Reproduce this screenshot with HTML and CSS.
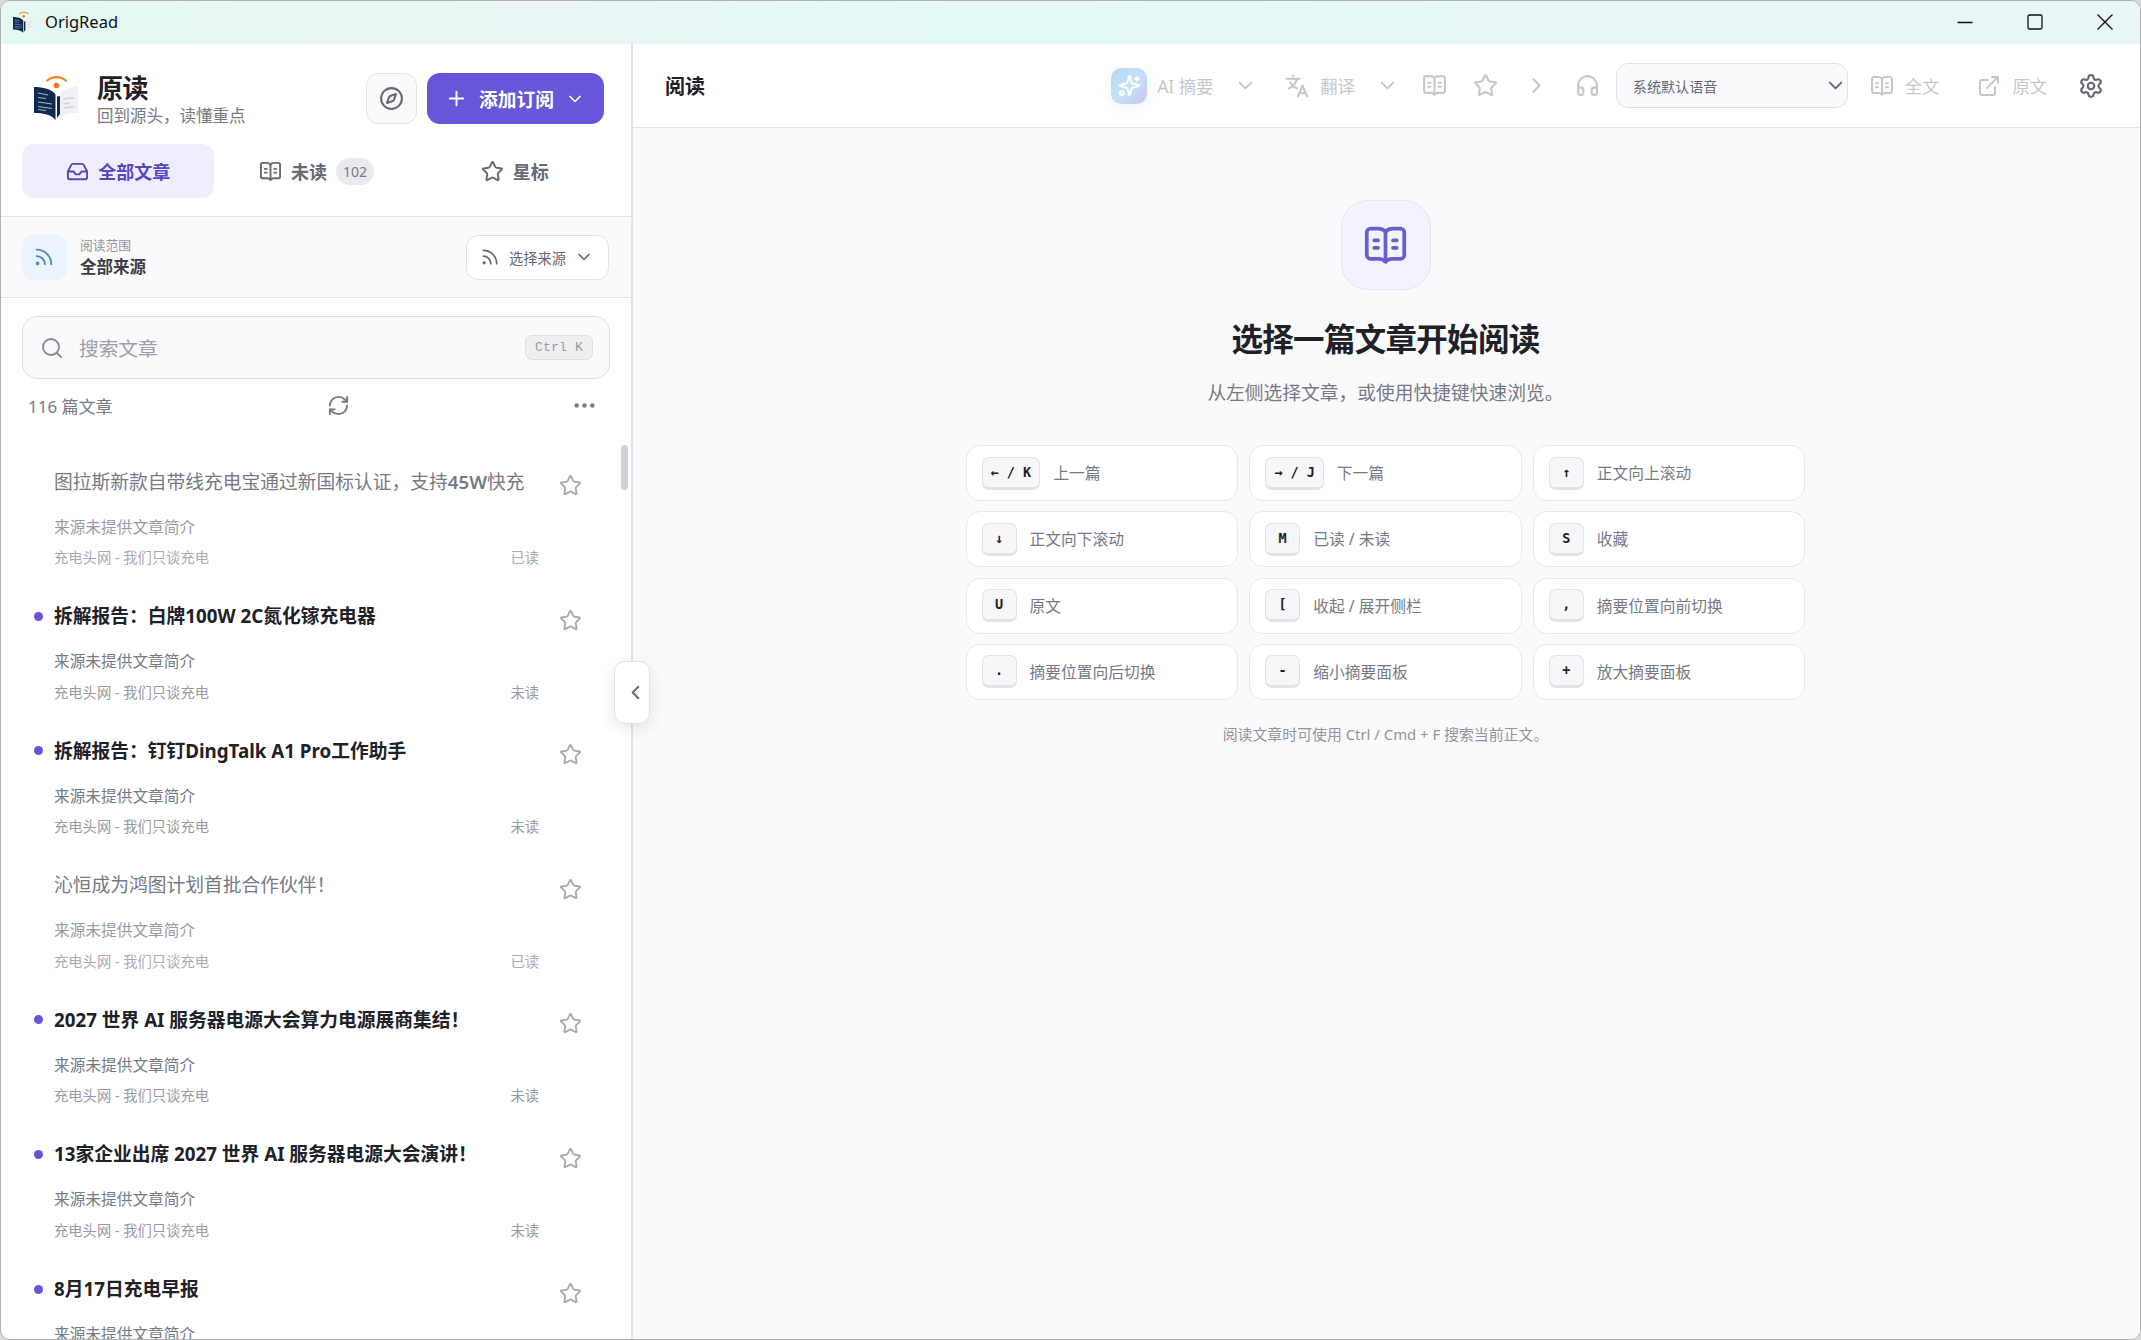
FILE: index.html
```html
<!doctype html>
<html lang="zh-CN">
	<head>
		<meta charset="UTF-8" />
		<meta name="viewport" content="width=device-width, initial-scale=1.0" />
		<title>OrigRead</title>
		<link rel="stylesheet" href="styles.css">
	</head>
	<body>
		<svg class="sprite" aria-hidden="true">
			<symbol id="logo" viewBox="0 0 44 45">
				<path d="M12.500 6.200a14.500 14.500 0 0 1 20 0" fill="none" stroke="#fb861c" stroke-width="2.200" />
				<circle cx="22.500" cy="10.500" r="2.800" fill="#f5741a" />
				<path d="M44 11v27c-8 0-15 1-19 6.500V21c3-6 10-9.500 19-10z" fill="#f0f1f5" />
				<path d="M29.500 24l11-1.500M29.500 28.500h6M29.500 33l11-1.500" stroke="#cfd2de" stroke-width="1.300" />
				<path d="M0 12c9 0 18 2 21.500 7.500V45C17 39.500 9 38 0 38zM23 22c1-1.500 3-1.500 3 0v17l-3 4z" fill="#10294f" />
				<path d="M4 18l10 2M4 22.500l8 1M4 27l14 2M4 31.500l14 2M4 34.500l8 1" stroke="#a9b4ca" stroke-width="1.100" />
			</symbol>
			<symbol id="compass" viewBox="0 0 24 24"><circle cx="12" cy="12" r="10" /><path d="m16.240 7.760-1.804 5.411a2 2 0 0 1-1.265 1.265L7.760 16.240l1.804-5.411a2 2 0 0 1 1.265-1.265z" /></symbol>
			<symbol id="plus" viewBox="0 0 24 24"><path d="M5 12h14M12 5v14" /></symbol>
			<symbol id="down" viewBox="0 0 24 24"><path d="m6 9 6 6 6-6" /></symbol>
			<symbol id="right" viewBox="0 0 24 24"><path d="m9 18 6-6-6-6" /></symbol>
			<symbol id="left" viewBox="0 0 24 24"><path d="m15 18-6-6 6-6" /></symbol>
			<symbol id="inbox" viewBox="0 0 24 24"><path d="M22 12h-6l-2 3h-4l-2-3H2" /><path d="M5.450 5.110 2 12v6a2 2 0 0 0 2 2h16a2 2 0 0 0 2-2v-6l-3.450-6.890A2 2 0 0 0 16.760 4H7.240a2 2 0 0 0-1.790 1.110z" /></symbol>
			<symbol id="book" viewBox="0 0 24 24"><path d="M12 5v15.500M6 9.300h2M6 13.200h2M16 9.300h2M16 13.200h2" /><path d="M12 20.700c-.7-1-2-1.600-3.500-1.600H4a2 2 0 0 1-2-2V5a2 2 0 0 1 2-2h4c1.700 0 3.200.6 4 1.800.8-1.200 2.300-1.800 4-1.800h4a2 2 0 0 1 2 2v12.100a2 2 0 0 1-2 2h-4.500c-1.500 0-2.800.6-3.500 1.600z" /></symbol>
			<symbol id="star" viewBox="0 0 24 24"><path d="M11.525 2.295a.53.53 0 0 1 .95 0l2.310 4.679a2.123 2.123 0 0 0 1.595 1.160l5.166.756a.53.53 0 0 1 .294.904l-3.736 3.638a2.123 2.123 0 0 0-.611 1.878l.882 5.140a.53.53 0 0 1-.771.560l-4.618-2.428a2.122 2.122 0 0 0-1.973 0L6.396 21.010a.53.53 0 0 1-.77-.560l.881-5.139a2.122 2.122 0 0 0-.611-1.879L2.160 9.795a.53.53 0 0 1 .294-.906l5.165-.755a2.122 2.122 0 0 0 1.597-1.160z" /></symbol>
			<symbol id="rss" viewBox="0 0 24 24"><path d="M4 11a9 9 0 0 1 9 9M4 4a16 16 0 0 1 16 16" /><circle cx="5" cy="19" r="1" /></symbol>
			<symbol id="search" viewBox="0 0 24 24"><circle cx="11" cy="11" r="8" /><path d="m21 21-4.300-4.300" /></symbol>
			<symbol id="refresh" viewBox="0 0 24 24"><path d="M3 12a9 9 0 0 1 9-9 9.750 9.750 0 0 1 6.740 2.740L21 8" /><path d="M21 3v5h-5M21 12a9 9 0 0 1-9 9 9.750 9.750 0 0 1-6.740-2.740L3 16" /><path d="M8 16H3v5" /></symbol>
			<symbol id="more" viewBox="0 0 24 24"><circle cx="12" cy="12" r="1" /><circle cx="19" cy="12" r="1" /><circle cx="5" cy="12" r="1" /></symbol>
			<symbol id="sparkles" viewBox="0 0 24 24"><path d="M9.937 15.500A2 2 0 0 0 8.500 14.063l-6.135-1.582a.5.5 0 0 1 0-.962L8.500 9.936A2 2 0 0 0 9.937 8.500l1.582-6.135a.5.5 0 0 1 .963 0L14.063 8.500A2 2 0 0 0 15.500 9.937l6.135 1.581a.5.5 0 0 1 0 .964L15.500 14.063a2 2 0 0 0-1.437 1.437l-1.582 6.135a.5.5 0 0 1-.963 0z" /><path d="M20 3v4M22 5h-4" /><circle cx="4" cy="20" r="2" /></symbol>
			<symbol id="translate" viewBox="0 0 24 24"><path d="M1.500 4.800h13M7.800 1.800h.6M12 5c-1 4-4 7.500-8 9.500M5 8.500c2 3 4 4.800 7 6" /><path d="m12.800 22.500 4.700-11 4.700 11M14.500 19.300h6" /></symbol>
			<symbol id="headphones" viewBox="0 0 24 24"><path d="M3 14h3a2 2 0 0 1 2 2v3a2 2 0 0 1-2 2H5a2 2 0 0 1-2-2v-7a9 9 0 0 1 18 0v7a2 2 0 0 1-2 2h-1a2 2 0 0 1-2-2v-3a2 2 0 0 1 2-2h3" /></symbol>
			<symbol id="external" viewBox="0 0 24 24"><path d="M15 3h6v6M10 14 21 3M18 13v6a2 2 0 0 1-2 2H5a2 2 0 0 1-2-2V8a2 2 0 0 1 2-2h6" /></symbol>
			<symbol id="gear" viewBox="0 0 24 24"><path d="M9.671 4.136a2.340 2.340 0 0 1 4.659 0 2.340 2.340 0 0 0 3.319 1.915 2.340 2.340 0 0 1 2.330 4.033 2.340 2.340 0 0 0 0 3.831 2.340 2.340 0 0 1-2.330 4.033 2.340 2.340 0 0 0-3.319 1.915 2.340 2.340 0 0 1-4.659 0 2.340 2.340 0 0 0-3.320-1.915 2.340 2.340 0 0 1-2.330-4.033 2.340 2.340 0 0 0 0-3.831A2.340 2.340 0 0 1 6.350 6.051a2.340 2.340 0 0 0 3.319-1.915" /><circle cx="12" cy="12" r="3" /></symbol>
		</svg>

		<div class="window">
			<header class="titlebar">
				<svg class="app-icon"><use href="#logo" /></svg>
				<span>OrigRead</span>
				<div class="controls">
					<svg viewBox="0 0 16 16"><path d="M.5 8.500h15" /></svg>
					<svg viewBox="0 0 16 16"><rect x="1" y="1" width="14" height="14" rx="1.500" /></svg>
					<svg viewBox="0 0 16 16"><path d="m.5.5 15 15m0-15-15 15" /></svg>
				</div>
			</header>

			<div class="app">
				<aside class="sidebar">
					<div class="brand">
						<svg class="logo"><use href="#logo" /></svg>
						<div class="brand-text">
							<h1>原读</h1>
							<p>回到源头，读懂重点</p>
						</div>
						<button class="discover"><svg class="icon"><use href="#compass" /></svg></button>
						<button class="add">
							<svg class="icon"><use href="#plus" /></svg>
							<span>添加订阅</span>
							<svg class="icon small"><use href="#down" /></svg>
						</button>
					</div>
					<nav class="tabs">
						<button class="tab active"><svg class="icon"><use href="#inbox" /></svg>全部文章</button>
						<button class="tab"><svg class="icon"><use href="#book" /></svg>未读<span class="badge">102</span></button>
						<button class="tab"><svg class="icon"><use href="#star" /></svg>星标</button>
					</nav>

					<div class="scope">
						<div class="scope-icon"><svg class="icon"><use href="#rss" /></svg></div>
						<div class="scope-text">
							<span>阅读范围</span>
							<strong>全部来源</strong>
						</div>
						<button class="source">
							<svg class="icon"><use href="#rss" /></svg>
							<span>选择来源</span>
							<svg class="icon small"><use href="#down" /></svg>
						</button>
					</div>

					<div class="search">
						<svg class="icon"><use href="#search" /></svg>
						<span>搜索文章</span>
						<kbd>Ctrl K</kbd>
					</div>
					<div class="list-head">
						<span>116 篇文章</span>
						<svg class="icon"><use href="#refresh" /></svg>
						<svg class="icon more"><use href="#more" /></svg>
					</div>

					<div class="list">
						<article class="item read">
							<h2>图拉斯新款自带线充电宝通过新国标认证，支持<b>45W</b>快充</h2>
							<svg class="icon"><use href="#star" /></svg>
							<p>来源未提供文章简介</p>
							<footer><span>充电头网 - 我们只谈充电</span><span>已读</span></footer>
						</article>
						<article class="item">
							<h2>拆解报告：白牌100W 2C氮化镓充电器</h2>
							<svg class="icon"><use href="#star" /></svg>
							<p>来源未提供文章简介</p>
							<footer><span>充电头网 - 我们只谈充电</span><span>未读</span></footer>
						</article>
						<article class="item">
							<h2>拆解报告：钉钉DingTalk A1 Pro工作助手</h2>
							<svg class="icon"><use href="#star" /></svg>
							<p>来源未提供文章简介</p>
							<footer><span>充电头网 - 我们只谈充电</span><span>未读</span></footer>
						</article>
						<article class="item read">
							<h2>沁恒成为鸿图计划首批合作伙伴！</h2>
							<svg class="icon"><use href="#star" /></svg>
							<p>来源未提供文章简介</p>
							<footer><span>充电头网 - 我们只谈充电</span><span>已读</span></footer>
						</article>
						<article class="item">
							<h2>2027 世界 AI 服务器电源大会算力电源展商集结！</h2>
							<svg class="icon"><use href="#star" /></svg>
							<p>来源未提供文章简介</p>
							<footer><span>充电头网 - 我们只谈充电</span><span>未读</span></footer>
						</article>
						<article class="item">
							<h2>13家企业出席 2027 世界 AI 服务器电源大会演讲！</h2>
							<svg class="icon"><use href="#star" /></svg>
							<p>来源未提供文章简介</p>
							<footer><span>充电头网 - 我们只谈充电</span><span>未读</span></footer>
						</article>
						<article class="item">
							<h2>8月17日充电早报</h2>
							<svg class="icon"><use href="#star" /></svg>
							<p>来源未提供文章简介</p>
						</article>
						<div class="scrollbar"></div>
					</div>
					<button class="collapse"><svg class="icon"><use href="#left" /></svg></button>
				</aside>

				<main class="reader">
					<div class="toolbar">
						<h2>阅读</h2>
						<div class="tool ai"><i><svg class="icon"><use href="#sparkles" /></svg></i>AI 摘要</div>
						<svg class="icon chevron"><use href="#down" /></svg>
						<div class="tool translate"><svg class="icon"><use href="#translate" /></svg>翻译</div>
						<svg class="icon chevron"><use href="#down" /></svg>
						<svg class="icon single"><use href="#book" /></svg>
						<svg class="icon single"><use href="#star" /></svg>
						<svg class="icon single"><use href="#right" /></svg>
						<svg class="icon single"><use href="#headphones" /></svg>
						<div class="voice">系统默认语音<svg class="icon"><use href="#down" /></svg></div>
						<div class="tool full"><svg class="icon"><use href="#book" /></svg>全文</div>
						<div class="tool origin"><svg class="icon"><use href="#external" /></svg>原文</div>
						<svg class="icon settings"><use href="#gear" /></svg>
					</div>

					<section class="empty">
						<div class="empty-icon"><svg class="icon"><use href="#book" /></svg></div>
						<h2>选择一篇文章开始阅读</h2>
						<p>从左侧选择文章，或使用快捷键快速浏览。</p>
						<div class="keys">
							<div class="key"><kbd>← / K</kbd><span>上一篇</span></div>
							<div class="key"><kbd>→ / J</kbd><span>下一篇</span></div>
							<div class="key"><kbd>↑</kbd><span>正文向上滚动</span></div>
							<div class="key"><kbd>↓</kbd><span>正文向下滚动</span></div>
							<div class="key"><kbd>M</kbd><span>已读 / 未读</span></div>
							<div class="key"><kbd>S</kbd><span>收藏</span></div>
							<div class="key"><kbd>U</kbd><span>原文</span></div>
							<div class="key"><kbd>[</kbd><span>收起 / 展开侧栏</span></div>
							<div class="key"><kbd>,</kbd><span>摘要位置向前切换</span></div>
							<div class="key"><kbd>.</kbd><span>摘要位置向后切换</span></div>
							<div class="key"><kbd>-</kbd><span>缩小摘要面板</span></div>
							<div class="key"><kbd>+</kbd><span>放大摘要面板</span></div>
						</div>
						<small>阅读文章时可使用 Ctrl / Cmd + F 搜索当前正文。</small>
					</section>
				</main>
			</div>
		</div>
	</body>
</html>
```

FILE: styles.css
```css
* {
	box-sizing: border-box;
	margin: 0;
	padding: 0;
}
body {
	width: 100vw;
	height: 100vh;
	overflow: hidden;
	background-color: #d9d9dc;
	color: #202127;
	font-family: "Noto Sans", "Noto Sans CJK SC", sans-serif;
}
button {
	border: 0;
	background: none;
	font: inherit;
	color: inherit;
}
.sprite {
	position: absolute;
	width: 0;
	height: 0;
}
.icon {
	flex: none;
	width: 23px;
	height: 23px;
	fill: none;
	stroke: currentColor;
	stroke-width: 2;
	stroke-linecap: round;
	stroke-linejoin: round;
}
.window {
	display: flex;
	flex-direction: column;
	height: 1340px;
	border: 1px solid #aeb0b2;
	border-radius: 10px;
	overflow: hidden;
	background-color: #fff;
}

/* title bar */
.titlebar {
	display: flex;
	align-items: center;
	height: 43px;
	padding: 0 27px 2px 12px;
	background: linear-gradient(90deg, #e3f9f4 0, #e9f7f2 250px, #e9f6f6 640px, #e2f9f8 1000px, #e8f6f7 1500px);
	color: #111;
	font-size: 16.500px;
}
.app-icon {
	width: 21px;
	height: 22px;
	margin-right: 11px;
}
.controls {
	display: flex;
	gap: 54px;
	margin-left: auto;
}
.controls svg {
	width: 16px;
	height: 16px;
	fill: none;
	stroke: #111;
	stroke-width: 1.300;
}
.app {
	display: flex;
	flex: 1;
	min-height: 0;
}

/* sidebar */
.sidebar {
	position: relative;
	display: flex;
	flex-direction: column;
	flex: none;
	width: 632px;
	border-right: 2px solid #e2e2e9;
}
.brand {
	display: flex;
	align-items: center;
	height: 81px;
	margin-top: 14px;
	padding: 0 27px 0 33px;
}
.logo {
	width: 44px;
	height: 45px;
	margin: 0 19px 3px 0;
}
.brand-text {
	margin: 2px auto 0 0;
}
.brand h1 {
	font-size: 26px;
	line-height: 32px;
	letter-spacing: -0.600px;
}
.brand p {
	color: #777985;
	font-size: 16.500px;
	line-height: 24px;
}
.discover {
	display: flex;
	align-items: center;
	justify-content: center;
	width: 51px;
	height: 51px;
	border: 1px solid #e2e2e8;
	border-radius: 12px;
	background-color: #fafafc;
	color: #666874;
}
.discover .icon {
	width: 25px;
	height: 25px;
}
.add {
	display: flex;
	align-items: center;
	width: 177px;
	height: 51px;
	margin-left: 10px;
	padding-left: 18px;
	border-radius: 13px;
	background-color: #6656d9;
	color: #fff;
	font-size: 18.750px;
	font-weight: 700;
}
.add span {
	margin: 0 11px;
}
.add .small {
	width: 20px;
	height: 20px;
}
.tabs {
	display: grid;
	grid-template-columns: repeat(3, 1fr);
	gap: 6px;
	height: 78px;
	padding: 5px 20px 18px 21px;
	border-bottom: 1px solid #e2e2e8;
}
.tab {
	display: flex;
	align-items: center;
	justify-content: center;
	gap: 9px;
	border-radius: 12px;
	color: #666874;
	font-size: 18px;
	font-weight: 600;
}
.active {
	background-color: #f0edff;
	color: #5747c4;
}
.badge {
	height: 27px;
	margin-top: 1px;
	padding: 0 7px;
	border-radius: 14px;
	background-color: #e9e9ef;
	color: #777985;
	font-size: 14px;
	font-weight: 400;
	line-height: 27px;
}
.scope {
	display: flex;
	align-items: center;
	height: 81px;
	padding: 0 22px 0 21px;
	border-bottom: 1px solid #e2e2e8;
	background-color: #fafafb;
}
.scope-icon {
	display: flex;
	align-items: center;
	justify-content: center;
	width: 45px;
	height: 45px;
	margin-right: 13px;
	border-radius: 11px;
	background-color: #ebf3fd;
	color: #5089c4;
}
.scope-icon .icon {
	width: 22px;
	height: 22px;
	margin-right: 1px;
}
.scope-text {
	display: flex;
	flex-direction: column;
	margin-right: auto;
}
.scope-text span {
	color: #92949e;
	font-size: 12.750px;
	line-height: 19px;
}
.scope-text strong {
	color: #3c3d46;
	font-size: 16.500px;
	line-height: 23px;
}
.source {
	display: flex;
	align-items: center;
	width: 143px;
	height: 45px;
	padding-left: 13px;
	border: 1px solid #e0e0e7;
	border-radius: 12px;
	background-color: #fff;
	color: #666874;
	font-size: 14.250px;
}
.source .icon {
	width: 20px;
	height: 20px;
}
.source span {
	margin: 0 8px 0 9px;
}
.search {
	display: flex;
	align-items: center;
	height: 63px;
	margin: 18px 21px 0 21px;
	padding: 0 16px 0 17px;
	border: 1px solid #dfdfe7;
	border-radius: 15px;
	background-color: #fafafc;
	color: #858792;
}
.search .icon {
	width: 24px;
	height: 24px;
	stroke-width: 1.800;
}
.search span {
	flex: 1;
	margin-left: 15px;
	color: #9c9ea8;
	font-size: 19.700px;
}
.search kbd {
	width: 68px;
	height: 25px;
	border: 1px solid #dedee3;
	border-radius: 7px;
	background-color: #efeff2;
	color: #9a9ca5;
	font-family: "Liberation Mono", monospace;
	font-size: 13.300px;
	line-height: 23px;
	text-align: center;
}
.list-head {
	display: flex;
	align-items: center;
	justify-content: space-between;
	height: 53px;
	padding: 0 26px 0 27px;
	color: #777985;
	font-size: 17px;
}
.list-head .more {
	width: 41px;
	height: 27px;
}
.list {
	position: relative;
	flex: 1;
	min-height: 0;
	padding: 16px 0 0 53px;
	overflow: hidden;
}
.item {
	position: relative;
	display: grid;
	grid-template-columns: 485px 24px;
	grid-template-rows: 67px 23px 40px;
	align-items: center;
	height: 134.600px;
}
.item h2 {
	font-size: 18.750px;
	line-height: 30px;
	white-space: nowrap;
}
.item:not(.read)::before {
	content: "";
	position: absolute;
	left: -20px;
	top: 29px;
	width: 9px;
	height: 9px;
	border-radius: 50%;
	background-color: #6656d9;
}
.item > .icon {
	margin: 8px 0 0 20px;
	color: #a9abb4;
}
.item p,
.item footer {
	grid-column: 1;
	color: #777985;
	font-size: 15.700px;
	line-height: 24px;
}
.item footer {
	display: flex;
	justify-content: space-between;
	color: #989aa4;
	font-size: 14.300px;
}
.read h2 {
	color: #777985;
	font-weight: 400;
}
.read b {
	font-weight: 600;
}
.read p {
	color: #999ba4;
}
.read footer {
	color: #a9abb3;
}
.scrollbar {
	position: absolute;
	right: 3px;
	top: 13px;
	width: 7px;
	height: 45px;
	border-radius: 4px;
	background-color: #d0d0da;
}
.collapse {
	position: absolute;
	z-index: 2;
	right: -19px;
	top: 617px;
	display: flex;
	align-items: center;
	justify-content: center;
	width: 36px;
	height: 63px;
	padding-left: 6px;
	border: 1px solid #e2e2e8;
	border-radius: 11px;
	background-color: #fff;
	box-shadow: 0 4px 16px rgba(30, 30, 60, 0.100);
	color: #666874;
}

/* reader */
.reader {
	flex: 1;
	min-width: 0;
	background-color: #fafafc;
}
.toolbar {
	display: flex;
	align-items: center;
	height: 84px;
	padding: 0 36px 0 32px;
	border-bottom: 1px solid #e2e2e6;
	background-color: #fff;
	color: #c6c7cd;
}
.toolbar h2 {
	margin-right: auto;
	color: #202127;
	font-size: 20px;
}
.tool {
	display: flex;
	align-items: center;
	font-size: 17.300px;
}
.tool .icon {
	width: 24px;
	height: 24px;
	margin-right: 11px;
}
.ai i {
	display: flex;
	align-items: center;
	justify-content: center;
	width: 36px;
	height: 36px;
	margin-right: 10px;
	border-radius: 10px;
	background: linear-gradient(135deg, #b9d6f5, #c2e2f8 50%, #c9c6f3);
	box-shadow: 0 4px 14px rgba(120, 160, 240, 0.120);
	color: #fff;
}
.ai .icon {
	width: 23px;
	height: 23px;
	margin: 0;
}
.chevron {
	margin: 0 28px 0 21px;
}
.translate + .chevron {
	margin-right: -3px;
}
.single {
	width: 25px;
	height: 25px;
	margin-left: 26px;
}
.voice {
	display: flex;
	align-items: center;
	justify-content: space-between;
	width: 232px;
	height: 45px;
	margin: 0 22px 0 16px;
	padding: 0 0 0 16px;
	border: 1px solid #e0e0e7;
	border-radius: 12px;
	background-color: #fafafc;
	color: #666874;
	font-size: 14.100px;
}
.origin {
	margin: 0 31px 0 38px;
}
.settings {
	width: 26px;
	height: 26px;
	color: #666874;
}
.empty {
	display: flex;
	flex-direction: column;
	align-items: center;
	padding: 72px 2px 0 0;
}
.empty-icon {
	display: flex;
	align-items: center;
	justify-content: center;
	width: 90px;
	height: 90px;
	border: 1px solid #e5e4ef;
	border-radius: 27px;
	background-color: #f3f2ff;
	color: #6a5fc8;
}
.empty-icon .icon {
	width: 45px;
	height: 45px;
}
.empty h2 {
	margin-top: 27px;
	font-size: 31.500px;
	line-height: 44px;
	letter-spacing: -0.700px;
}
.empty p {
	margin: 17px 0 37px;
	color: #777985;
	font-size: 18.750px;
	line-height: 30px;
}
.keys {
	display: grid;
	grid-template-columns: repeat(3, 1fr);
	gap: 10.300px 11px;
	width: 840px;
}
.key {
	display: flex;
	align-items: center;
	height: 56px;
	padding-left: 15px;
	border: 1px solid #e7e7ed;
	border-radius: 14px;
	background-color: #fff;
	color: #777985;
	font-size: 15.750px;
}
.key span {
	margin: 0 0 1px 13px;
}
.key kbd {
	min-width: 35px;
	height: 33px;
	padding: 0 8px;
	border: 1px solid #e2e2e8;
	border-bottom-width: 3px;
	border-radius: 7px;
	background-color: #f7f7fa;
	color: #202127;
	font-family: "DejaVu Sans Mono", monospace;
	font-size: 13.500px;
	font-weight: 700;
	line-height: 28px;
	text-align: center;
}
.empty small {
	margin-top: 22px;
	color: #92949e;
	font-size: 14.900px;
	line-height: 24px;
}
```
